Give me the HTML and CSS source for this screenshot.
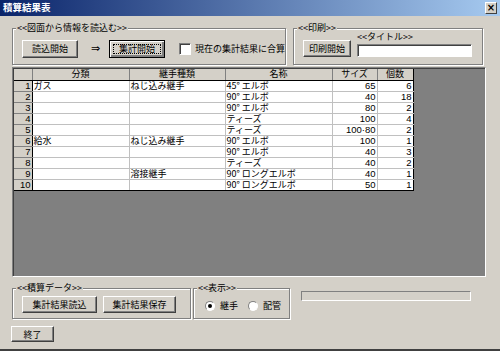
FILE: index.html
```html
<!DOCTYPE html>
<html lang="ja">

<head>
    <meta charset="UTF-8">
    <meta name="viewport" content="width=device-width, initial-scale=1.0">
    <title>積算結果表</title>
    <link rel="stylesheet" href="styles.css">
</head>

<body>
    <div class="window">
        <div class="titlebar">
            <span class="title">積算結果表</span>
            <span class="close">×</span>
        </div>

        <div class="content">
            <div class="top-row">
                <div class="group group-read">
                    <span class="group-label">&lt;&lt;図面から情報を読込む&gt;&gt;</span>
                    <button class="btn btn-read">読込開始</button>
                    <span class="arrow">⇒</span>
                    <button class="btn btn-sum default">集計開始</button>
                    <label class="check"><span class="checkbox"></span>現在の集計結果に合算</label>
                </div>
                <div class="group group-print">
                    <span class="group-label">&lt;&lt;印刷&gt;&gt;</span>
                    <button class="btn btn-print">印刷開始</button>
                    <div class="title-field">
                        <span class="field-label">&lt;&lt;タイトル&gt;&gt;</span>
                        <span class="textbox"></span>
                    </div>
                </div>
            </div>

            <div class="grid">
                <table>
                    <colgroup>
                        <col class="c-no">
                        <col class="c-kind">
                        <col class="c-joint">
                        <col class="c-name">
                        <col class="c-size">
                        <col class="c-qty">
                    </colgroup>
                    <thead>
                        <tr>
                            <th></th>
                            <th>分類</th>
                            <th>継手種類</th>
                            <th>名称</th>
                            <th>サイズ</th>
                            <th>個数</th>
                        </tr>
                    </thead>
                    <tbody>
                        <tr><th>1</th><td>ガス</td><td>ねじ込み継手</td><td>45° エルボ</td><td class="num">65</td><td class="num">6</td></tr>
                        <tr><th>2</th><td></td><td></td><td>90° エルボ</td><td class="num">40</td><td class="num">18</td></tr>
                        <tr><th>3</th><td></td><td></td><td>90° エルボ</td><td class="num">80</td><td class="num">2</td></tr>
                        <tr><th>4</th><td></td><td></td><td>ティーズ</td><td class="num">100</td><td class="num">4</td></tr>
                        <tr><th>5</th><td></td><td></td><td>ティーズ</td><td class="num">100·80</td><td class="num">2</td></tr>
                        <tr><th>6</th><td>給水</td><td>ねじ込み継手</td><td>90° エルボ</td><td class="num">100</td><td class="num">1</td></tr>
                        <tr><th>7</th><td></td><td></td><td>90° エルボ</td><td class="num">40</td><td class="num">3</td></tr>
                        <tr><th>8</th><td></td><td></td><td>ティーズ</td><td class="num">40</td><td class="num">2</td></tr>
                        <tr><th>9</th><td></td><td>溶接継手</td><td>90° ロングエルボ</td><td class="num">40</td><td class="num">1</td></tr>
                        <tr><th>10</th><td></td><td></td><td>90° ロングエルボ</td><td class="num">50</td><td class="num">1</td></tr>
                    </tbody>
                </table>
            </div>

            <div class="bottom-row">
                <div class="group group-data">
                    <span class="group-label">&lt;&lt;積算データ&gt;&gt;</span>
                    <button class="btn btn-load">集計結果読込</button>
                    <button class="btn btn-save">集計結果保存</button>
                </div>
                <div class="group group-view">
                    <span class="group-label">&lt;&lt;表示&gt;&gt;</span>
                    <label class="radio"><span class="radio-dot checked"></span>継手</label>
                    <label class="radio"><span class="radio-dot"></span>配管</label>
                </div>
                <div class="progress"></div>
            </div>

            <button class="btn btn-exit">終了</button>
        </div>
    </div>
</body>

</html>
```

FILE: styles.css
```css
* {
    box-sizing: border-box;
}

body {
    margin: 0;
    font-family: "Noto Sans CJK JP", "DejaVu Sans", sans-serif;
    font-size: 9px;
    line-height: 1;
    color: #000000;
    background-color: #d4d0c8;
}

.window {
    width: 500px;
    height: 351px;
    background-color: #d4d0c8;
    border-bottom: 2px solid #404040;
    display: flex;
    flex-direction: column;
}

.titlebar {
    height: 16px;
    background: linear-gradient(to right, #0a246a, #a6caf0);
    display: flex;
    align-items: center;
    justify-content: space-between;
    padding: 0 3px 0 3px;
}

.title {
    color: #ffffff;
    font-weight: bold;
    font-size: 9.5px;
}

.close {
    width: 12px;
    height: 12px;
    background-color: #d4d0c8;
    border: 1px solid;
    border-color: #ffffff #404040 #404040 #ffffff;
    font-family: "DejaVu Sans", sans-serif;
    font-size: 10px;
    font-weight: bold;
    display: flex;
    align-items: center;
    justify-content: center;
    color: #000000;
}

.content {
    padding: 12px 0 0 12px;
}

/* frames */
.group {
    position: relative;
    border: 1px solid #808080;
    box-shadow: inset 1px 1px #ffffff, 1px 1px #ffffff;
    display: flex;
    align-items: center;
    white-space: nowrap;
}

.group-label {
    position: absolute;
    top: -6px;
    left: 3px;
    padding: 0 1px;
    background-color: #d4d0c8;
}

.top-row {
    display: flex;
    gap: 7px;
}

.group-read {
    width: 274px;
    height: 37px;
    padding: 4px 0 0 9px;
}

.group-print {
    width: 190px;
    height: 37px;
    padding: 4px 0 0 9px;
}

/* buttons */
.btn {
    font-family: inherit;
    font-size: 9px;
    line-height: 1;
    padding: 0;
    background-color: #d4d0c8;
    border: 1px solid;
    border-color: #ffffff #404040 #404040 #ffffff;
    box-shadow: inset -1px -1px #808080;
    color: #000000;
    white-space: nowrap;
}

.btn-read {
    width: 57px;
    height: 18px;
}

.arrow {
    width: 9px;
    margin: 0 9px 0 13px;
    font-family: "DejaVu Sans", sans-serif;
    font-size: 11px;
}

.btn-sum {
    width: 57px;
    height: 18px;
}

.btn.default {
    border: 1px solid #000000;
    box-shadow: inset 1px 1px #ffffff, inset -2px -2px #808080;
    outline: 1px dotted #000000;
    outline-offset: -5px;
}

.check {
    display: flex;
    align-items: center;
    margin-left: 14px;
}

.checkbox {
    width: 12px;
    height: 12px;
    background-color: #ffffff;
    border: 1px solid;
    border-color: #808080 #ffffff #ffffff #808080;
    box-shadow: inset 1px 1px #404040;
    margin-right: 4px;
}

.btn-print {
    width: 48px;
    height: 17px;
}

.title-field {
    display: flex;
    flex-direction: column;
    align-items: flex-start;
    margin-left: 6px;
    margin-top: -8px;
}

.field-label {
    margin: 0 0 3px 0;
}

.textbox {
    width: 115px;
    height: 13px;
    background-color: #ffffff;
    border: 1px solid;
    border-color: #808080 #ffffff #ffffff #808080;
    box-shadow: inset 1px 1px #404040;
}

/* grid */
.grid {
    width: 474px;
    height: 210px;
    margin-top: 2px;
    background-color: #808080;
    border: 1px solid;
    border-color: #808080 #ffffff #ffffff #808080;
    box-shadow: inset 1px 1px #404040;
    padding: 1px 0 0 1px;
}

table {
    border-collapse: collapse;
    table-layout: fixed;
    width: 399px;
    font-size: 9px;
}

.c-no { width: 18px; }
.c-kind { width: 97px; }
.c-joint { width: 96px; }
.c-name { width: 107px; }
.c-size { width: 45px; }
.c-qty { width: 36px; }

th,
td {
    height: 11px;
    padding: 0 1px;
    line-height: 10px;
    white-space: nowrap;
    font-weight: normal;
    vertical-align: middle;
}

thead th {
    background-color: #d4d0c8;
    border-right: 1px solid #808080;
    border-bottom: 1px solid #000000;
    text-align: center;
}

tbody th {
    background-color: #d4d0c8;
    border-right: 1px solid #000000;
    border-bottom: 1px solid #808080;
    text-align: right;
    font-family: "Liberation Sans", sans-serif;
    font-size: 9.5px;
}

tbody tr:last-child th,
tbody tr:last-child td {
    border-bottom: 1px solid #000000;
}

td {
    background-color: #ffffff;
    border-right: 1px solid #c0c0c0;
    border-bottom: 1px solid #c0c0c0;
}

td:last-child,
thead th:last-child {
    border-right: 1px solid #000000;
}

td.num {
    text-align: right;
    font-family: "Liberation Sans", sans-serif;
    font-size: 9.5px;
}

/* bottom */
.bottom-row {
    display: flex;
    align-items: flex-start;
    margin-top: 11px;
}

.group-data {
    width: 179px;
    height: 31px;
    padding: 2px 0 0 9px;
    gap: 6px;
}

.btn-load {
    width: 75px;
    height: 17px;
}

.btn-save {
    width: 73px;
    height: 17px;
}

.group-view {
    width: 97px;
    height: 31px;
    margin-left: 2px;
    padding: 4px 0 0 11px;
}

.radio {
    display: flex;
    align-items: center;
    margin-right: 10px;
}

.radio-dot {
    width: 10px;
    height: 10px;
    border-radius: 50%;
    background-color: #ffffff;
    border: 1px solid;
    border-color: #808080 #ffffff #ffffff #808080;
    margin-right: 5px;
    display: flex;
    align-items: center;
    justify-content: center;
}

.radio-dot.checked::after {
    content: "";
    width: 4px;
    height: 4px;
    border-radius: 50%;
    background-color: #000000;
}

.progress {
    width: 170px;
    height: 10px;
    margin: 3px 0 0 11px;
    border: 1px solid;
    border-color: #808080 #ffffff #ffffff #808080;
}

.btn-exit {
    width: 43px;
    height: 16px;
    margin: 7px 0 0 -1px;
}
```
